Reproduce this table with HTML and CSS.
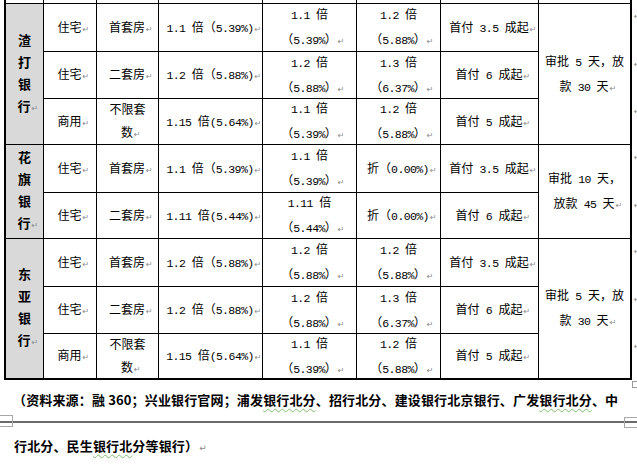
FILE: index.html
```html
<!DOCTYPE html>
<html lang="zh-CN">
<head>
<meta charset="utf-8">
<title>银行房贷对比</title>
<link rel="stylesheet" href="styles.css">
</head>
<body>
<div class="page">
  <div class="tablewrap">
    <div class="tbl">
      <div class="c stub"></div><div class="c stub"></div><div class="c stub"></div><div class="c stub"></div>
      <div class="c stub"></div><div class="c stub"></div><div class="c stub"></div><div class="c stub"></div>

      <div class="c bank r3"><div class="t">渣<br>打<br>银<br>行<span class="pm">↵</span></div></div>
      <div class="c"><div class="t">住宅<span class="pm">↵</span></div></div>
      <div class="c"><div class="t">首套房<span class="pm">↵</span></div></div>
      <div class="c"><div class="t"><span class="n">1.1 </span>倍（<span class="n">5.39%)</span><span class="pm">↵</span></div></div>
      <div class="c"><div class="t"><span class="n">1.1 </span>倍<br>（<span class="n">5.39%</span>）<span class="pm">↵</span></div></div>
      <div class="c"><div class="t"><span class="n">1.2 </span>倍<br>（<span class="n">5.88%</span>）<span class="pm">↵</span></div></div>
      <div class="c"><div class="t">首付<span class="n"> 3.5 </span>成起<span class="pm">↵</span></div></div>
      <div class="c r3"><div class="t">审批<span class="n"> 5 </span>天，放<br>款<span class="n"> 30 </span>天<span class="pm">↵</span></div></div>

      <div class="c"><div class="t">住宅<span class="pm">↵</span></div></div>
      <div class="c"><div class="t">二套房<span class="pm">↵</span></div></div>
      <div class="c"><div class="t"><span class="n">1.2 </span>倍（<span class="n">5.88%)</span><span class="pm">↵</span></div></div>
      <div class="c"><div class="t"><span class="n">1.2 </span>倍<br>（<span class="n">5.88%</span>）<span class="pm">↵</span></div></div>
      <div class="c"><div class="t"><span class="n">1.3 </span>倍<br>（<span class="n">6.37%</span>）<span class="pm">↵</span></div></div>
      <div class="c"><div class="t">首付<span class="n"> 6 </span>成起<span class="pm">↵</span></div></div>

      <div class="c"><div class="t">商用<span class="pm">↵</span></div></div>
      <div class="c"><div class="t">不限套<br>数<span class="pm">↵</span></div></div>
      <div class="c"><div class="t"><span class="n">1.15 </span>倍<span class="n">(5.64%)</span><span class="pm">↵</span></div></div>
      <div class="c"><div class="t"><span class="n">1.1 </span>倍<br>（<span class="n">5.39%</span>）<span class="pm">↵</span></div></div>
      <div class="c"><div class="t"><span class="n">1.2 </span>倍<br>（<span class="n">5.88%</span>）<span class="pm">↵</span></div></div>
      <div class="c"><div class="t">首付<span class="n"> 5 </span>成起<span class="pm">↵</span></div></div>

      <div class="c bank r2"><div class="t">花<br>旗<br>银<br>行<span class="pm">↵</span></div></div>
      <div class="c"><div class="t">住宅<span class="pm">↵</span></div></div>
      <div class="c"><div class="t">首套房<span class="pm">↵</span></div></div>
      <div class="c"><div class="t"><span class="n">1.1 </span>倍（<span class="n">5.39%)</span><span class="pm">↵</span></div></div>
      <div class="c"><div class="t"><span class="n">1.1 </span>倍<br>（<span class="n">5.39%</span>）<span class="pm">↵</span></div></div>
      <div class="c"><div class="t">折（<span class="n">0.00%)</span><span class="pm">↵</span></div></div>
      <div class="c"><div class="t">首付<span class="n"> 3.5 </span>成起<span class="pm">↵</span></div></div>
      <div class="c r2"><div class="t">审批<span class="n"> 10 </span>天，<br>放款<span class="n"> 45 </span>天<span class="pm">↵</span></div></div>

      <div class="c"><div class="t">住宅<span class="pm">↵</span></div></div>
      <div class="c"><div class="t">二套房<span class="pm">↵</span></div></div>
      <div class="c"><div class="t"><span class="n">1.11 </span>倍<span class="n">(5.44%)</span><span class="pm">↵</span></div></div>
      <div class="c"><div class="t"><span class="n">1.11 </span>倍<br>（<span class="n">5.44%</span>）<span class="pm">↵</span></div></div>
      <div class="c"><div class="t">折（<span class="n">0.00%)</span><span class="pm">↵</span></div></div>
      <div class="c"><div class="t">首付<span class="n"> 6 </span>成起<span class="pm">↵</span></div></div>

      <div class="c bank r3"><div class="t">东<br>亚<br>银<br>行<span class="pm">↵</span></div></div>
      <div class="c"><div class="t">住宅<span class="pm">↵</span></div></div>
      <div class="c"><div class="t">首套房<span class="pm">↵</span></div></div>
      <div class="c"><div class="t"><span class="n">1.2 </span>倍（<span class="n">5.88%)</span><span class="pm">↵</span></div></div>
      <div class="c"><div class="t"><span class="n">1.2 </span>倍<br>（<span class="n">5.88%</span>）<span class="pm">↵</span></div></div>
      <div class="c"><div class="t"><span class="n">1.2 </span>倍<br>（<span class="n">5.88%</span>）<span class="pm">↵</span></div></div>
      <div class="c"><div class="t">首付<span class="n"> 3.5 </span>成起<span class="pm">↵</span></div></div>
      <div class="c r3"><div class="t">审批<span class="n"> 5 </span>天，放<br>款<span class="n"> 30 </span>天<span class="pm">↵</span></div></div>

      <div class="c"><div class="t">住宅<span class="pm">↵</span></div></div>
      <div class="c"><div class="t">二套房<span class="pm">↵</span></div></div>
      <div class="c"><div class="t"><span class="n">1.2 </span>倍（<span class="n">5.88%)</span><span class="pm">↵</span></div></div>
      <div class="c"><div class="t"><span class="n">1.2 </span>倍<br>（<span class="n">5.88%</span>）<span class="pm">↵</span></div></div>
      <div class="c"><div class="t"><span class="n">1.3 </span>倍<br>（<span class="n">6.37%</span>）<span class="pm">↵</span></div></div>
      <div class="c"><div class="t">首付<span class="n"> 6 </span>成起<span class="pm">↵</span></div></div>

      <div class="c"><div class="t">商用<span class="pm">↵</span></div></div>
      <div class="c"><div class="t">不限套<br>数<span class="pm">↵</span></div></div>
      <div class="c"><div class="t"><span class="n">1.15 </span>倍<span class="n">(5.64%)</span><span class="pm">↵</span></div></div>
      <div class="c"><div class="t"><span class="n">1.1 </span>倍<br>（<span class="n">5.39%</span>）<span class="pm">↵</span></div></div>
      <div class="c"><div class="t"><span class="n">1.2 </span>倍<br>（<span class="n">5.88%</span>）<span class="pm">↵</span></div></div>
      <div class="c"><div class="t">首付<span class="n"> 5 </span>成起<span class="pm">↵</span></div></div>
    </div>
    <div class="eor">
      <span></span>
      <span>↵</span><span>↵</span><span>↵</span><span>↵</span>
      <span>↵</span><span>↵</span><span>↵</span><span>↵</span>
    </div>
    <span class="handle"></span>
  </div>

  <p class="cap cap1">（资料来源：融 360；兴业银行官网；浦发<span class="sp">银行北分</span>、招行北分、建设银行北京银行、广发<span class="sp">银行北分</span>、中</p>
  <div class="pgbreak"><span class="bx bx-l"></span><span class="bx bx-r"></span></div>
  <p class="cap cap2">行北分、民生<span class="sp">银行北</span>分等银行）<span class="pm">↵</span></p>
</div>
</body>
</html>
```

FILE: styles.css
```css
html, body {
  margin: 0;
  padding: 0;
  background: #fff;
}

.page {
  width: 637px;
  height: 471px;
  overflow: hidden;
  font-family: "Noto Sans CJK SC", "Noto Sans", sans-serif;
  color: #000;
}

.tablewrap {
  position: relative;
  display: flex;
  align-items: flex-start;
  padding-left: 4px;
}

.tbl {
  display: grid;
  grid-template-columns: 37px 52px 61px 103px 93px 83px 97px 91px;
  grid-template-rows: 3px 47px 46px 45px 47px 45px 47px 46px 44px;
  gap: 1px;
  background: #000;
  padding: 0 2px 2px 2px;
}

.c {
  background: #fff;
  display: flex;
  align-items: center;
  justify-content: center;
  min-width: 0;
}

.t {
  text-align: center;
  font-size: 12px;
  line-height: 23px;
  white-space: nowrap;
}

.bank {
  background: #d9d9d9;
}

.bank .t {
  font-weight: 700;
  font-size: 13px;
  line-height: 22px;
}

.r3 { grid-row: span 3; }
.r2 { grid-row: span 2; }

.n {
  font-family: "Liberation Mono", monospace;
  font-size: 11.5px;
  letter-spacing: -0.6px;
  white-space: pre;
}

.pm {
  display: inline-block;
  width: 0;
  overflow: visible;
  white-space: nowrap;
  font-family: "DejaVu Sans", sans-serif;
  font-size: 8px;
  font-weight: 400;
  letter-spacing: 0;
  color: #8a8a8a;
  padding-left: 1px;
}

.eor {
  display: grid;
  grid-template-rows: 3px 47px 46px 45px 47px 45px 47px 46px 44px;
  row-gap: 1px;
  padding-left: 2px;
  font-family: "DejaVu Sans", sans-serif;
  font-size: 8px;
  line-height: 23px;
  color: #8a8a8a;
}

.eor span {
  display: block;
  padding-top: 1px;
}

.handle {
  position: absolute;
  left: 632px;
  top: 381px;
  width: 5px;
  height: 5px;
  border: 1px solid #9a9a9a;
  background: #fff;
}

.cap {
  margin: 0;
  font-size: 13px;
  font-weight: 700;
  line-height: 20px;
  white-space: nowrap;
  letter-spacing: 0.15px;
}

.cap1 {
  margin-top: 10px;
  padding-left: 13px;
}

.cap2 {
  margin-top: 13px;
  padding-left: 14px;
}

.cap .pm {
  font-size: 9px;
}

.sp {
  text-decoration: underline wavy #7dbf6e;
  text-decoration-thickness: 1px;
  text-underline-offset: 3px;
  text-decoration-skip-ink: none;
}

.pgbreak {
  position: relative;
  margin-top: 11px;
  height: 2px;
  background: #6a6a6a;
}

.bx {
  position: absolute;
  border: 1px solid #a8a8a8;
  background: transparent;
}

.bx-l {
  left: -1px;
  top: -6px;
  width: 12px;
  height: 10px;
}

.bx-r {
  right: -1px;
  top: -4px;
  width: 12px;
  height: 9px;
}
```
